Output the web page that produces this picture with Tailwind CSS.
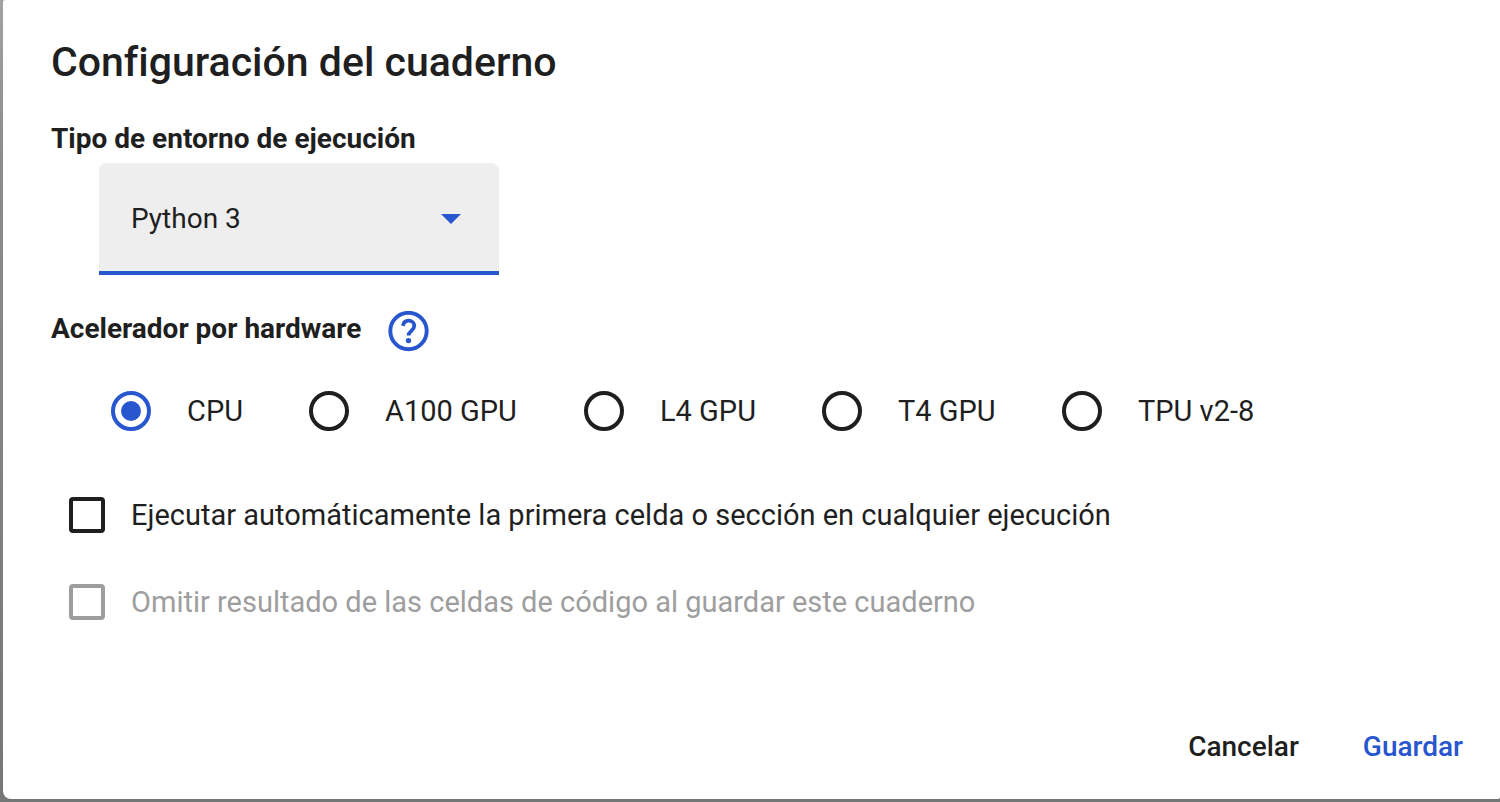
<!DOCTYPE html>
<html lang="es">
<head>
<meta charset="utf-8">
<meta name="viewport" content="width=device-width, initial-scale=1">
<title>Configuración del cuaderno</title>
<script src="https://cdn.jsdelivr.net/npm/@tailwindcss/browser@4"></script>
</head>
<body class="flex min-h-screen flex-col bg-linear-to-b from-[#a2a2a2] via-[#8c8c8c] via-20% to-[#757776] pb-[3px] pl-[3px] font-[Roboto,sans-serif] text-[29px] leading-10 text-[#1f1f1f]">
<form role="dialog" aria-labelledby="title" class="flex grow flex-col rounded-tl-xs rounded-br-xs rounded-bl-lg bg-white px-12 pt-[38px] pb-4">
  <h1 id="title" class="text-[41px] leading-12 font-medium [font-variant-ligatures:none]">Configuración del cuaderno</h1>

  <label for="runtime" class="mt-[33px] text-[28px] font-bold">Tipo de entorno de ejecución</label>
  <div class="relative mt-1 ml-12 w-[400px] max-w-full">
    <select id="runtime" class="block h-28 w-full appearance-none rounded-t-lg border-b-4 border-[#2756ce] bg-[#eeeeee] px-8 pt-1 text-[28px] outline-none">
      <option>Python 3</option>
    </select>
    <svg class="pointer-events-none absolute top-[51px] right-[38px] h-[10px] w-5 fill-[#2756ce]" viewBox="0 0 20 10" aria-hidden="true"><path d="M0 0h20L10 10z"/></svg>
  </div>

  <div class="mt-9 flex items-center gap-[26px]">
    <h2 id="hardware" class="-mt-1.5 text-[28px] font-bold">Acelerador por hardware</h2>
    <button type="button" aria-label="Ayuda" class="size-[42px] cursor-pointer">
      <svg class="size-[42px]" viewBox="0 0 42 42" aria-hidden="true">
        <circle cx="21.5" cy="20" r="18.2" fill="none" stroke="#2756ce" stroke-width="3.9"/>
        <path d="M15.9 14.8C16.5 11.6 18.6 9.7 21.5 9.7c3.2 0 5.8 2 5.8 5.1 0 2.3-1.4 3.6-3 5.1-1.8 1.6-2.8 2.5-2.8 4.6" fill="none" stroke="#2756ce" stroke-width="3.8"/>
        <circle cx="21.5" cy="29.6" r="2.7" fill="#2756ce"/>
      </svg>
    </button>
  </div>

  <div role="radiogroup" aria-labelledby="hardware" class="mt-[38px] ml-15 grid grid-cols-[198px_275px_238px_240px_auto]">
    <label class="flex items-center gap-9"><input type="radio" name="accel" checked class="size-10 appearance-none rounded-full border-4 border-[#1f1f1f] bg-clip-content p-1.5 checked:border-[#2756ce] checked:bg-[#2756ce]">CPU</label>
    <label class="flex items-center gap-9"><input type="radio" name="accel" class="size-10 appearance-none rounded-full border-4 border-[#1f1f1f] bg-clip-content p-1.5 checked:border-[#2756ce] checked:bg-[#2756ce]">A100 GPU</label>
    <label class="flex items-center gap-9"><input type="radio" name="accel" class="size-10 appearance-none rounded-full border-4 border-[#1f1f1f] bg-clip-content p-1.5 checked:border-[#2756ce] checked:bg-[#2756ce]">L4 GPU</label>
    <label class="flex items-center gap-9"><input type="radio" name="accel" class="size-10 appearance-none rounded-full border-4 border-[#1f1f1f] bg-clip-content p-1.5 checked:border-[#2756ce] checked:bg-[#2756ce]">T4 GPU</label>
    <label class="flex items-center gap-9"><input type="radio" name="accel" class="size-10 appearance-none rounded-full border-4 border-[#1f1f1f] bg-clip-content p-1.5 checked:border-[#2756ce] checked:bg-[#2756ce]">TPU v2-8</label>
  </div>

  <div class="mt-16 ml-[18px] flex flex-col items-start gap-[47px]">
    <label class="flex items-center gap-[26px]"><input type="checkbox" class="size-9 shrink-0 appearance-none rounded-sm border-4 border-[#1f1f1f] checked:bg-[#2756ce]">Ejecutar automáticamente la primera celda o sección en cualquier ejecución</label>
    <label class="flex items-center gap-[26px] text-[#9e9e9e]"><input type="checkbox" disabled class="size-9 shrink-0 appearance-none rounded-sm border-4 border-[#9e9e9e]">Omitir resultado de las celdas de código al guardar este cuaderno</label>
  </div>

  <div class="mt-auto -mr-[11px] flex justify-end text-[28px] font-medium">
    <button type="button" class="h-18 cursor-pointer px-8">Cancelar</button>
    <button type="submit" class="h-18 cursor-pointer pr-0 pl-8 text-[#2756ce]">Guardar</button>
  </div>
</form>
</body>
</html>
